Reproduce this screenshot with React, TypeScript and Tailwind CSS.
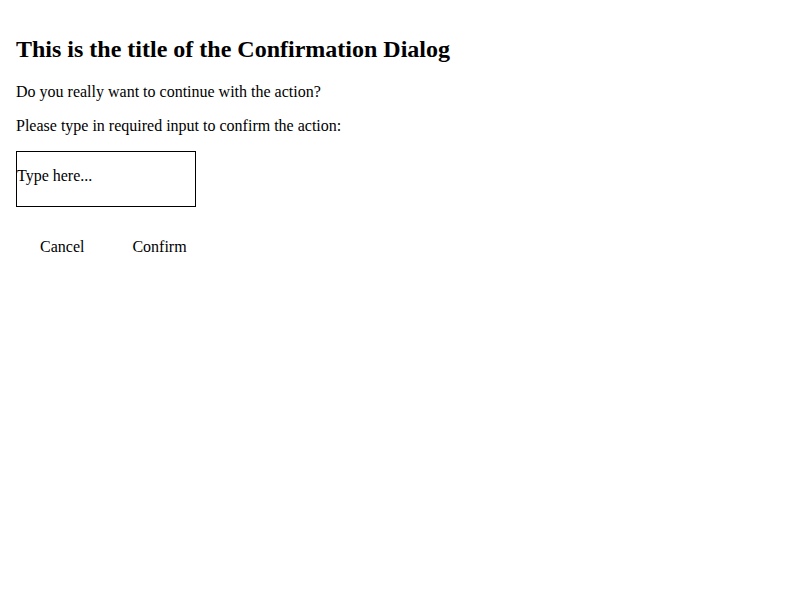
export default function App() {
  return (
    <div className="min-h-screen bg-white p-4 font-['Liberation_Serif',serif] text-black">
      <h2 className="mt-[19px] mb-5 text-2xl font-bold leading-[28px]">This is the title of the Confirmation Dialog</h2>
      <p className="mb-4 text-base leading-[18px]">Do you really want to continue with the action?</p>
      <p className="mb-4 text-base leading-[18px]">Please type in required input to confirm the action:</p>
      <input
        type="text"
        placeholder="Type here..."
        className="block h-[56px] w-[180px] border border-black bg-white px-0 pt-0 pb-[7px] text-base placeholder:text-black"
      />
      <div className="mt-[23px] flex">
        <button className="px-6 py-2 text-base leading-[18px]">Cancel</button>
        <button className="px-6 py-2 text-base leading-[18px]">Confirm</button>
      </div>
    </div>
  );
}
